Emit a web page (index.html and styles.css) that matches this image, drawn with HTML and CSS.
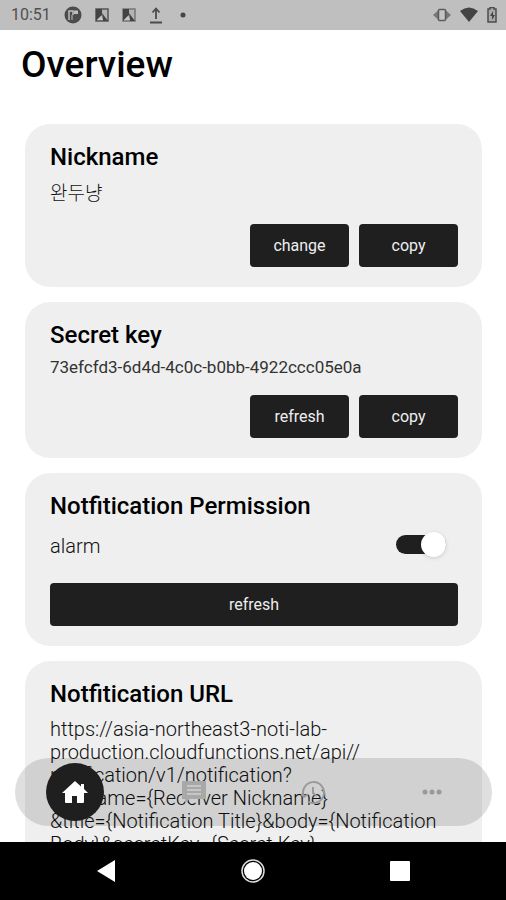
FILE: index.html
```html
<!DOCTYPE html>
<html lang="en">
<head>
<meta charset="utf-8">
<meta name="viewport" content="width=device-width, initial-scale=1">
<title>Overview</title>
<link rel="stylesheet" href="styles.css">
</head>
<body>
<div class="phone">
  <header class="status">
    <span class="clock">10:51</span>
    <svg class="icon" width="18" height="18" viewBox="0 0 18 18"><circle cx="9" cy="9" r="8.500" fill="#4c4c4c"/><path d="M5 14V5h4v4" fill="none" stroke="#bfbfbf" stroke-width="1.500"/><path d="M10 4.500h4V8h-4z" fill="#bfbfbf"/><path d="M8 9v5" stroke="#bfbfbf"/></svg>
    <svg class="icon" width="14" height="14" viewBox="0 0 14 14"><path d="M1 1h12v12H1z" fill="#b4b4b4" stroke="#555" stroke-width="1.500"/><path d="M1 1h6v6L1 13z" fill="#444"/><path d="M7 5l6 8H8z" fill="#444"/><path d="M2 12l4-4 2 4z" fill="#c8c8c8"/></svg>
    <svg class="icon" width="14" height="14" viewBox="0 0 14 14"><path d="M1 1h12v12H1z" fill="#b4b4b4" stroke="#777" stroke-width="1.500"/><path d="M1 1h6v6L1 13z" fill="#444"/><path d="M7 5l6 8H8z" fill="#444"/><path d="M2 12l4-4 2 4z" fill="#c8c8c8"/></svg>
    <svg class="icon" width="14" height="18" viewBox="0 0 14 18"><path d="M7 13V3M3.500 6.500L7 2.500l3.500 4M1 16.500h12" fill="none" stroke="#4c4c4c" stroke-width="1.800"/></svg>
    <svg class="icon dot" width="6" height="6" viewBox="0 0 6 6"><circle cx="3" cy="3" r="2.500" fill="#444"/></svg>
    <span class="spacer"></span>
    <svg class="icon" width="18" height="14" viewBox="0 0 18 14"><path d="M5 2.500L0 7l5 4.500zM13 2.500L18 7l-5 4.500z" fill="#777"/><rect x="5.500" y="1.500" width="7" height="11" rx="1" fill="#c4c4c4" stroke="#5c5c5c" stroke-width="1.500"/></svg>
    <svg class="icon" width="18" height="16" viewBox="0 0 18 16"><path d="M0 4Q9-3 18 4L9 15z" fill="#444"/></svg>
    <svg class="icon" width="10" height="16" viewBox="0 0 10 16"><path d="M3 2V.500h4V2h2v13H1V2z" fill="#aaa" stroke="#4c4c4c" stroke-width="1.500"/><path d="M6 4L3 9h2v4l3-5H6z" fill="#444"/></svg>
  </header>
  <div class="screen">
    <main class="content">
      <h1 class="title">Overview</h1>
      <section class="card">
        <h2 class="heading">Nickname</h2>
        <p class="text nickname" lang="ko">완두냥</p>
        <div class="actions">
          <button class="button" type="button">change</button>
          <button class="button" type="button">copy</button>
        </div>
      </section>
      <section class="card">
        <h2 class="heading">Secret key</h2>
        <p class="text key">73efcfd3-6d4d-4c0c-b0bb-4922ccc05e0a</p>
        <div class="actions">
          <button class="button" type="button">refresh</button>
          <button class="button" type="button">copy</button>
        </div>
      </section>
      <section class="card">
        <h2 class="heading">Notfitication Permission</h2>
        <div class="setting">
          <label class="text" for="alarm">alarm</label>
          <input class="switch" id="alarm" type="checkbox" role="switch" checked>
        </div>
        <button class="button wide" type="button">refresh</button>
      </section>
      <section class="card">
        <h2 class="heading">Notfitication URL</h2>
        <p class="text url">https://asia-northeast3-noti-lab-<br>production.cloudfunctions.net/api//<br>notification/v1/notification?<br>nickname={Receiver Nickname}<br>&amp;title={Notification Title}&amp;body={Notification<br>Body}&amp;secretKey={Secret Key}</p>
      </section>
    </main>
    <nav class="tabs" aria-label="Sections">
      <a class="tab active" href="#" aria-label="Home"><svg width="26" height="24" viewBox="0 0 26 24"><path d="M13 1L0 13h3v9q0 1 1 1h6v-7h5v7h6q1 0 1-1v-9h4l-4-4V4h-3v2.500z" fill="#fff"/></svg></a>
      <a class="tab" href="#" aria-label="Messages"><svg width="24" height="24" viewBox="0 0 24 24"><path d="M0 1h24v18H8l-5 4v-4H0z" fill="#a8a8a8"/><path d="M5 6h14M5 10h14M5 14h14" stroke="#d0d0d0" stroke-width="1.500"/></svg></a>
      <a class="tab" href="#" aria-label="History"><svg width="24" height="24" viewBox="0 0 24 24" fill="none" stroke="#9a9a9a" stroke-width="2"><path d="M3 17A10.500 10.500 0 1 1 7 21.500M12 7v6l4 3M0 14l3 3 4-3"/></svg></a>
      <a class="tab" href="#" aria-label="More"><svg width="20" height="6" viewBox="0 0 20 6" fill="#999"><circle cx="3" cy="3" r="2.500"/><circle cx="10" cy="3" r="2.500"/><circle cx="17" cy="3" r="2.500"/></svg></a>
    </nav>
  </div>
  <footer class="system">
    <button class="key-button" type="button" aria-label="Back"><svg width="24" height="24" viewBox="0 0 24 24"><path d="M3 12L21 1v22z" fill="#fff"/></svg></button>
    <button class="key-button" type="button" aria-label="Home"><svg width="24" height="24" viewBox="0 0 24 24"><circle cx="12" cy="12" r="9" fill="#fff"/><circle cx="12" cy="12" r="11" fill="none" stroke="#ddd" stroke-width="1.500"/></svg></button>
    <button class="key-button" type="button" aria-label="Recent apps"><svg width="24" height="24" viewBox="0 0 24 24"><rect x="2" y="2" width="20" height="20" rx="1" fill="#fff"/></svg></button>
  </footer>
</div>
</body>
</html>
```
FILE: styles.css
```css
* { box-sizing: border-box; }
body {
  margin: 0;
  background: #fff;
  color: #000;
  font-family: Roboto, "Noto Sans CJK KR", sans-serif;
}
h1, h2, p { margin: 0; }
button { border: 0; font: inherit; cursor: pointer; }
svg { display: block; }

.phone { display: flex; flex-direction: column; height: 100vh; }

.status {
  display: flex;
  flex: none;
  align-items: center;
  gap: 13px;
  height: 30px;
  padding: 0 9px 0 11px;
  background: #bfbfbf;
}
.clock { color: #505050; font-size: 16px; line-height: 20px; }
.dot { margin-left: 4px; }
.spacer { flex: 1; }
.status .spacer ~ .icon { margin-left: -4px; }

.screen { position: relative; flex: 1; min-height: 0; }
.content {
  display: flex;
  flex-direction: column;
  gap: 15px;
  height: 100%;
  padding: 12px 24px 0 25px;
  overflow: hidden;
}
.title {
  margin: 0 -4px 22px;
  font-size: 37px;
  font-weight: 500;
  line-height: 45px;
}

.card {
  flex: none;
  padding: 20px 24px 20px 25px;
  border-radius: 25px;
  background: #efefef;
}
.heading { font-size: 24px; font-weight: 500; line-height: 26px; }
.text { color: #111; font-size: 20px; font-weight: 300; line-height: 23px; }
.nickname { margin: 12px 0 19px; font-size: 19px; }
.key { margin: 8px 0 16px; font-size: 17px; font-weight: 400; color: #333; }
.url { margin-top: 11px; }
.actions { display: flex; justify-content: flex-end; gap: 10px; }
.button {
  width: 99px;
  height: 43px;
  padding: 0;
  border-radius: 4px;
  background: #1f1f1f;
  color: #eee;
  font-size: 16px;
  line-height: 20px;
}
.button.wide { width: 100%; display: block; }

.setting {
  display: flex;
  align-items: flex-start;
  justify-content: space-between;
  margin: 16px 12px 25px 0;
}
.switch {
  position: relative;
  width: 50px;
  height: 19px;
  margin: 0;
  border-radius: 10px;
  background: #1f1f1f;
  appearance: none;
}
.switch::after {
  content: "";
  position: absolute;
  top: -3px;
  right: 0;
  width: 25px;
  height: 25px;
  border-radius: 50%;
  background: #fff;
  box-shadow: 0 1px 4px rgba(0, 0, 0, .15);
}

.tabs {
  position: absolute;
  right: 14px;
  bottom: 16px;
  left: 15px;
  display: flex;
  align-items: center;
  justify-content: space-around;
  height: 68px;
  border-radius: 34px;
  background: rgba(0, 0, 0, .125);
}
.tab {
  display: grid;
  place-items: center;
  width: 58px;
  height: 58px;
  border-radius: 50%;
}
.tab.active { background: #1f1f1f; }

.system {
  display: flex;
  flex: none;
  align-items: center;
  justify-content: space-around;
  height: 58px;
  padding: 0 33px;
  background: #000;
}
.key-button { width: 24px; padding: 0; background: none; }
```
